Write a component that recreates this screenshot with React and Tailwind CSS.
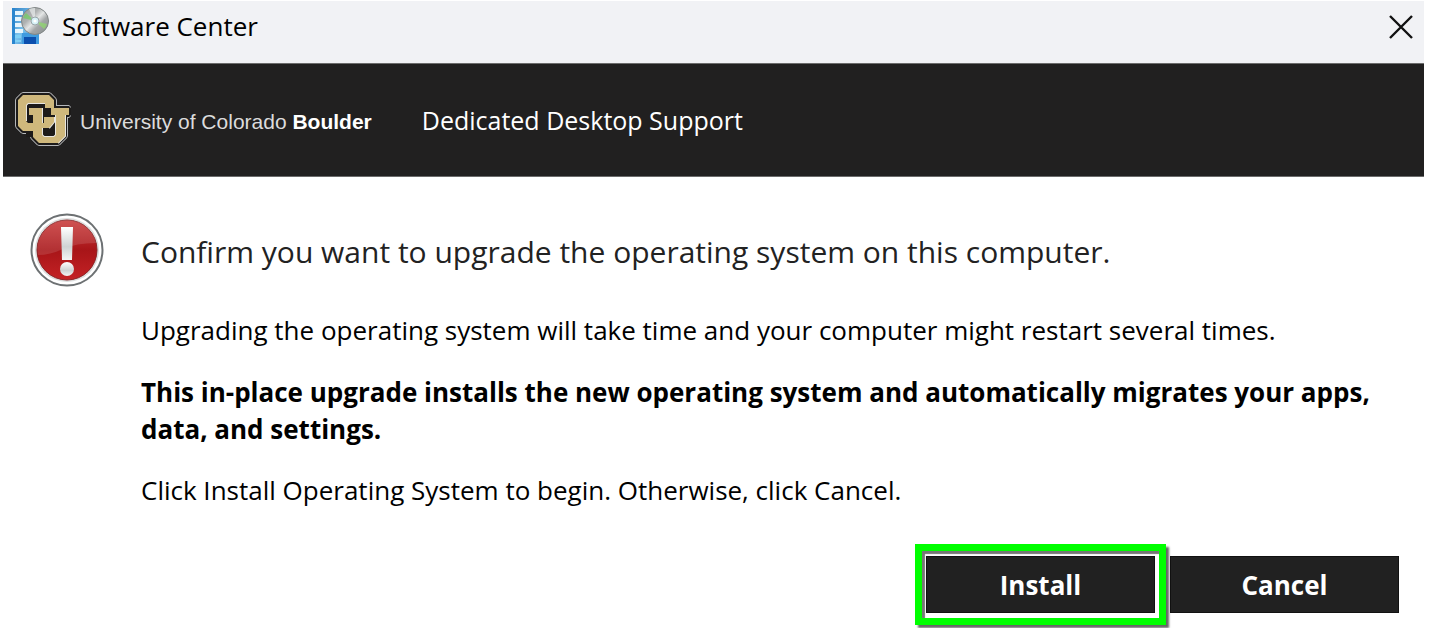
function SoftwareCenterIcon() {
  return (
    <svg viewBox="0 0 38 38" className="size-[38px]" aria-hidden="true">
      <defs>
        <linearGradient id="box" x1="0" y1="0" x2="1" y2="1">
          <stop offset="0" stopColor="#2f7fc4" />
          <stop offset="0.5" stopColor="#7cc4ee" />
          <stop offset="1" stopColor="#1f6fc0" />
        </linearGradient>
        <linearGradient id="disc" x1="0" y1="0" x2="1" y2="1">
          <stop offset="0" stopColor="#8f9494" />
          <stop offset="0.35" stopColor="#b0b3b3" />
          <stop offset="0.5" stopColor="#e4e6e6" />
          <stop offset="0.65" stopColor="#a4a7a8" />
          <stop offset="1" stopColor="#858a8b" />
        </linearGradient>
      </defs>
      <path d="M1 1H28V37H1Z" fill="url(#box)" />
      <path d="M1 1H4V37H1Z" fill="#2a86cf" />
      <path d="M4 4h8v4H4zM4 10h8v4H4zM4 16h8v4H4zM4 22h8v4H4z" fill="#e6f5fd" />
      <path d="M4 28h6v3H4zM4 33h6v2H4z" fill="#7fd0f5" />
      <path d="M11 26H28V37H11Z" fill="#3f9be0" />
      <path d="M13 30H25V37H13Z" fill="#0b4fae" />
      <circle cx="24" cy="14" r="13.5" fill="url(#disc)" stroke="#808686" />
      <path d="M24 14L12 11A13 13 0 0 1 15 6Z" fill="#6fd060" opacity="0.7" />
      <path d="M24 14L36 17A13 13 0 0 1 33 22Z" fill="#8fdc6a" opacity="0.7" />
      <path d="M24 14L18 2A13 13 0 0 1 24 1Z" fill="#f4f6f6" opacity="0.6" />
      <circle cx="24" cy="14" r="4" fill="#d6f1f7" stroke="#9aa5a8" />
      <circle cx="24" cy="14" r="1.6" fill="#fff" />
    </svg>
  );
}

const CU_C = 'M9 3H35L40 8V16H31V11H14L12 13V29L14 31H30V25H40V30L35 36H28V39H9L4 34V8Z';
const CU_U = 'M15 16H28V43L30 45H40L42 43V23H37V16H55V23H51V44L44 51H25L19 45V23H15Z';

function CuLogo() {
  return (
    <svg viewBox="-1 -1 58 58" className="size-[58px]" aria-hidden="true">
      {/* silver edge, black keyline, then the gold letters */}
      <g fill="#b4b6b9" stroke="#b4b6b9" strokeWidth="6" strokeLinejoin="bevel">
        <path d={CU_C} />
        <path d={CU_U} />
      </g>
      <g fill="#1d1b1a" stroke="#1d1b1a" strokeWidth="4" strokeLinejoin="bevel">
        <path d={CU_C} />
        <path d={CU_U} />
        <path d="M12 11H42V45H12Z" stroke="none" />
      </g>
      <path d="M31 11H14L12 13V29M40 25V30L35 36M28 16V43L30 45H40L42 43V23M51 23V44L44 51" fill="none" stroke="#e8e6e0" strokeWidth="2" />
      <g fill="#cfb87c">
        <path d={CU_C} />
        <path d={CU_U} />
      </g>
    </svg>
  );
}

function AlertIcon() {
  return (
    <svg viewBox="0 0 74 74" className="size-[74px] shrink-0" role="img" aria-label="Warning">
      <defs>
        <linearGradient id="red" x1="0" y1="0" x2="0" y2="1">
          <stop offset="0" stopColor="#c93a3a" />
          <stop offset="0.5" stopColor="#a81518" />
          <stop offset="1" stopColor="#c42225" />
        </linearGradient>
        <linearGradient id="mark" x1="0" y1="0" x2="0" y2="1">
          <stop offset="0" stopColor="#ffffff" />
          <stop offset="0.6" stopColor="#cfd3d3" />
          <stop offset="1" stopColor="#f4f4f4" />
        </linearGradient>
      </defs>
      <circle cx="37" cy="37" r="35.5" fill="#fff" stroke="#6d7173" strokeWidth="2" />
      <circle cx="37" cy="37" r="32" fill="#dcdede" />
      <circle cx="37" cy="37" r="30" fill="url(#red)" stroke="#8b2426" />
      <path d="M8 42A29.5 29.5 0 0 1 66 30Q46 30 33 36T8 42Z" fill="#fff" opacity="0.12" />
      <path d="M31 14H43L42 47H32Z" fill="url(#mark)" />
      <circle cx="37" cy="56" r="7" fill="url(#mark)" />
    </svg>
  );
}

export default function App() {
  return (
    <div className="min-h-screen bg-white pt-px pr-[6px] pl-[3px] font-['Open_Sans','Noto_Sans',sans-serif] text-black">
      {/* Title bar */}
      <div className="flex h-[62px] items-start justify-between bg-[#f1f2f5] pt-[6px] pr-[10px] pl-[8px]">
        <div className="flex items-center gap-[13px]">
          <SoftwareCenterIcon />
          <span className="text-[26px] leading-[38px]">Software Center</span>
        </div>
        <button type="button" aria-label="Close" className="mt-[7px]">
          <svg viewBox="0 0 26 26" className="size-[26px]" fill="none" stroke="#111" strokeWidth="2.4">
            <path d="M2 2L24 24M24 2L2 24" />
          </svg>
        </button>
      </div>

      {/* Brand header */}
      <header className="flex h-[114px] items-center border-y border-[#6b6b6b] bg-[#212020] pl-[10px] text-white">
        <CuLogo />
        <p className="mt-[4px] ml-[9px] font-['Liberation_Sans',sans-serif] text-[21px] leading-[30px] text-[#dcdcdc]">
          University of Colorado <b className="text-white">Boulder</b>
        </p>
        <h1 className="ml-[50px] text-[25px] leading-[36px]">Dedicated Desktop Support</h1>
      </header>

      <main className="flex items-start gap-[37px] pt-[36px] pr-[30px] pl-[27px]">
        <AlertIcon />
        <div className="text-[26px] leading-[37px]">
          <h2 className="mt-[17px] text-[30px] leading-[44px] text-[#222]">
            Confirm you want to upgrade the operating system on this computer.
          </h2>
          <p className="mt-[38px]">
            Upgrading the operating system will take time and your computer might restart several times.
          </p>
          <p className="mt-[25px] font-bold">
            This in-place upgrade installs the new operating system and automatically migrates your apps, data, and settings.
          </p>
          <p className="mt-[24px]">Click Install Operating System to begin. Otherwise, click Cancel.</p>
        </div>
      </main>

      <div className="mt-[35px] flex items-center justify-end gap-[4px] pr-[25px] text-[26px] leading-[36px] font-bold text-white">
        <div className="border-[7px] border-[#00ff00] px-[4px] py-[5px] shadow-[3px_3px_2px_#666,inset_3px_3px_1px_#777]">
          <button type="button" className="h-[57px] w-[229px] border border-[#111] bg-[#212121]">
            Install
          </button>
        </div>
        <button type="button" className="h-[57px] w-[229px] border border-[#111] bg-[#212121]">
          Cancel
        </button>
      </div>
    </div>
  );
}
